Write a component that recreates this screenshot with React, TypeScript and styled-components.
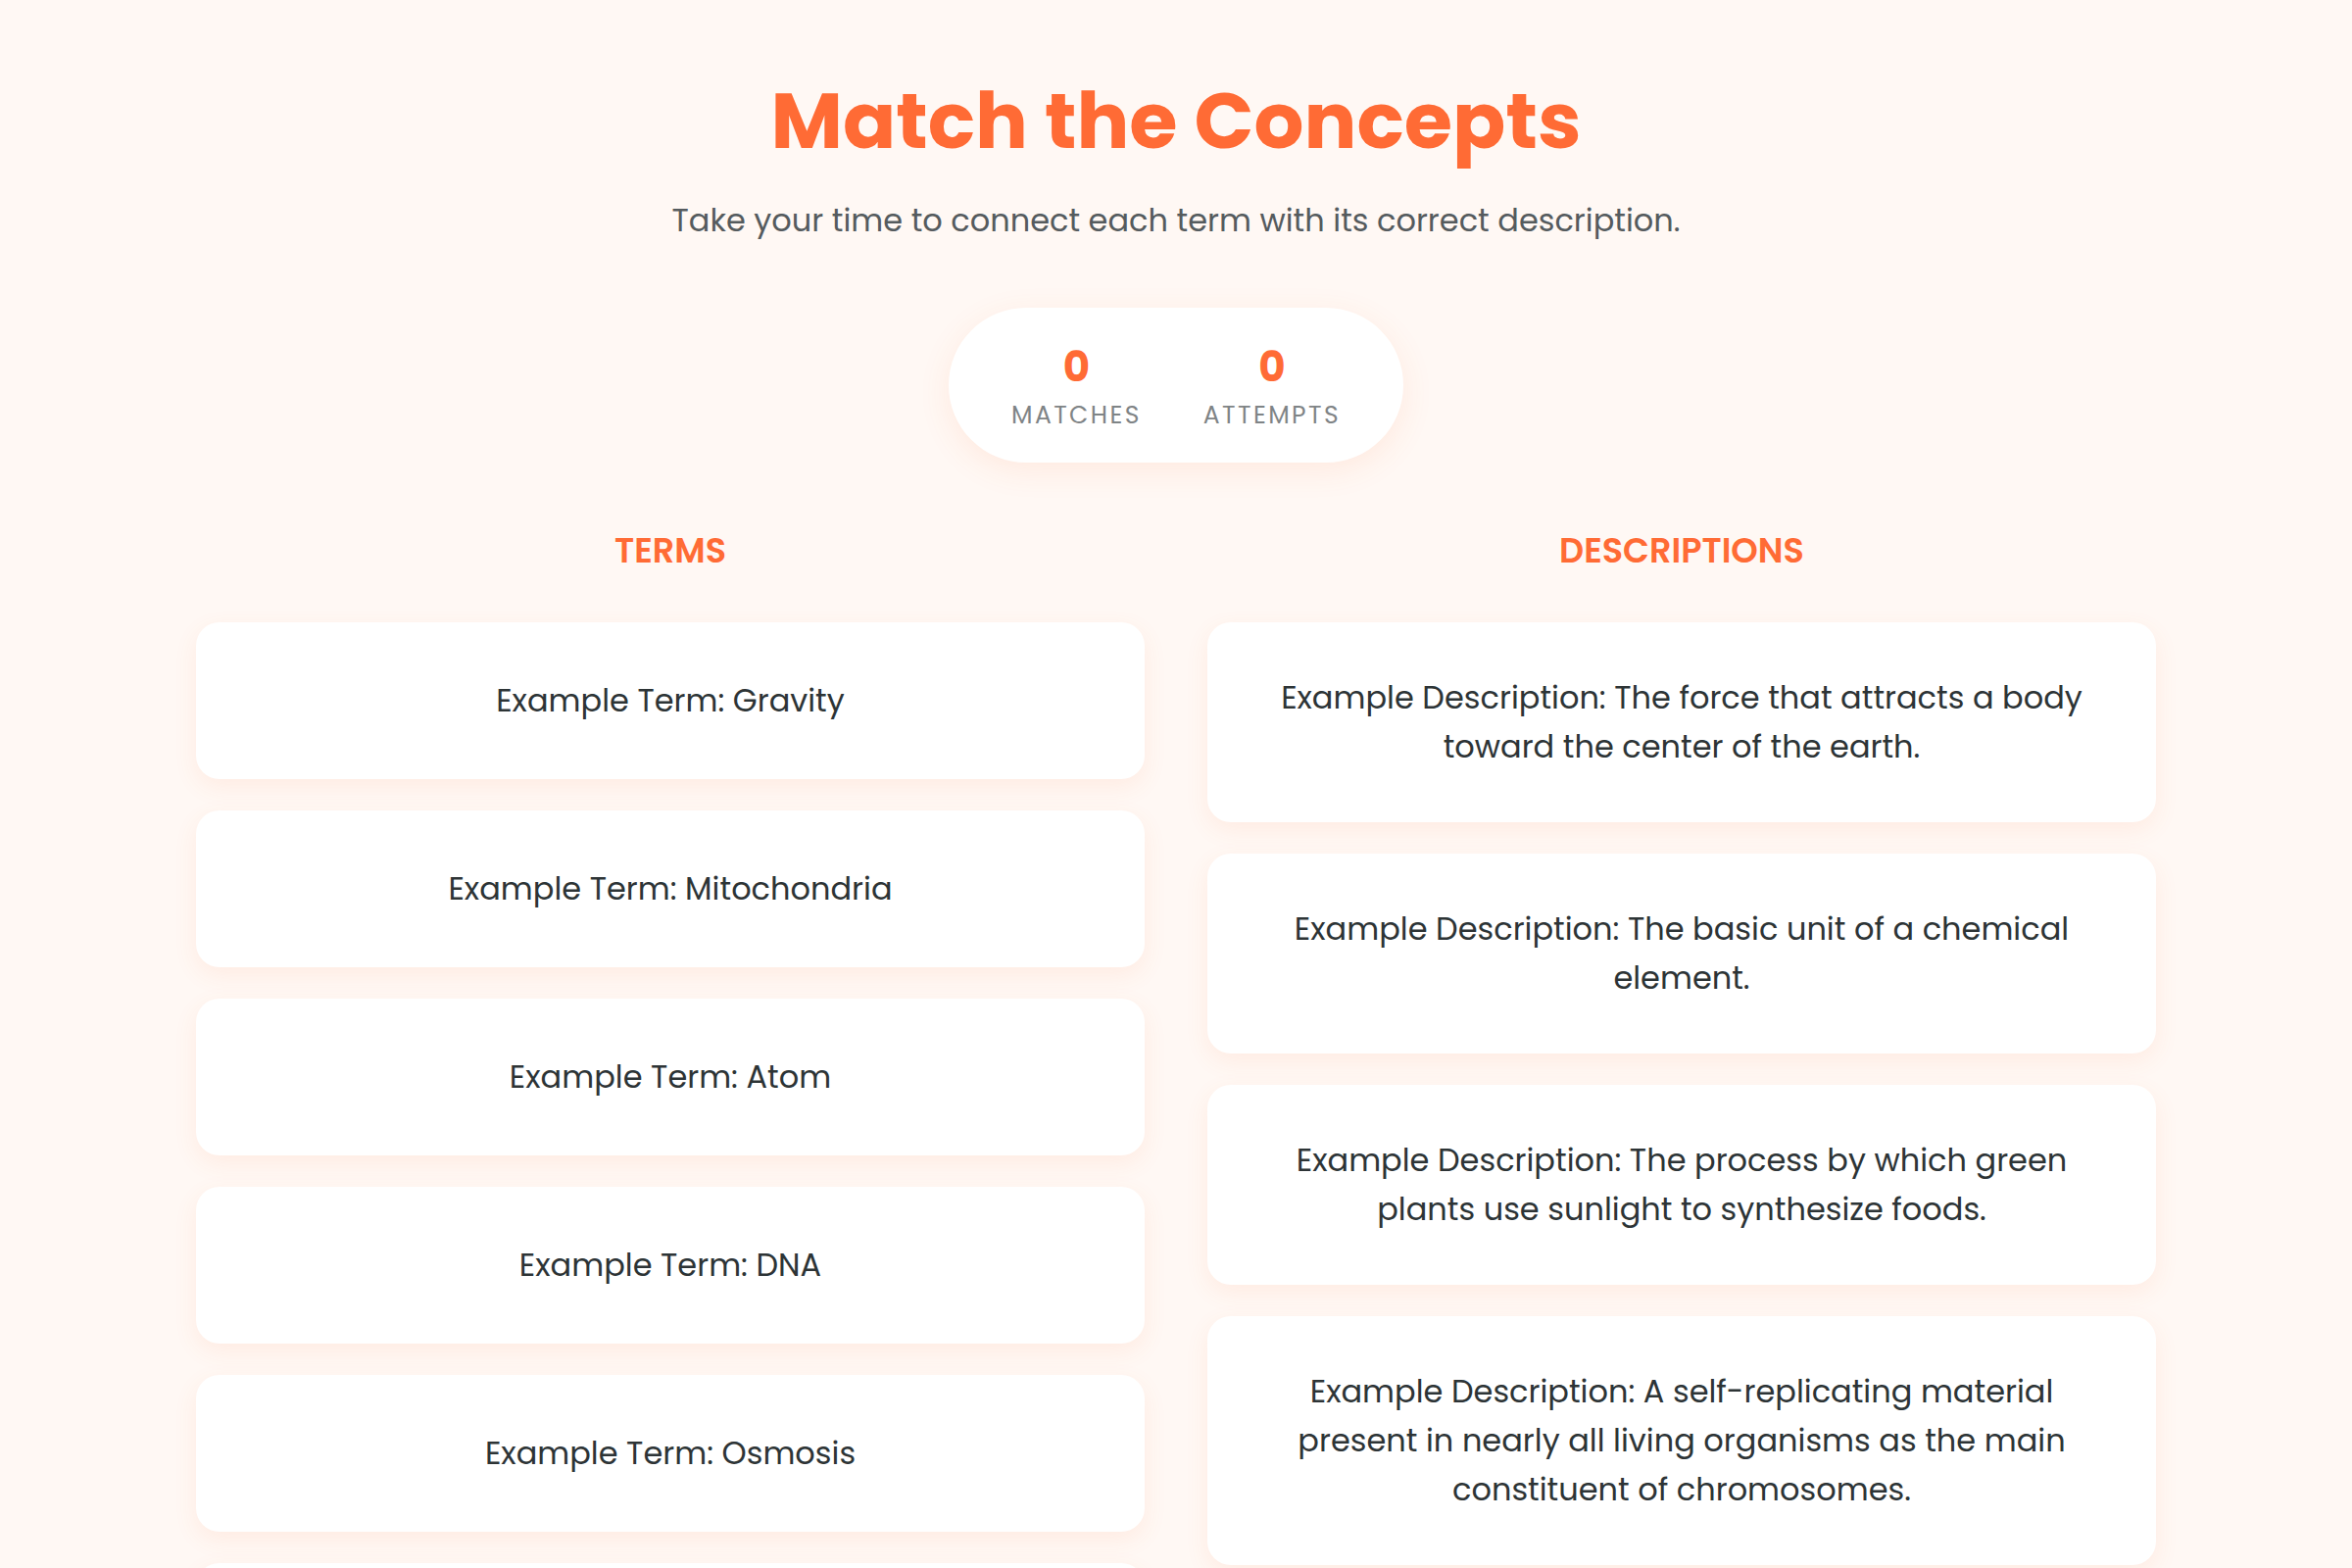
import styled, { createGlobalStyle } from "styled-components";

const GlobalStyle = createGlobalStyle`
  * {
    box-sizing: border-box;
  }
  body {
    margin: 0;
    background: #fff8f4;
    font-family: "Poppins", "Open Sans", "Noto Sans", sans-serif;
    color: #2d3436;
  }
`;

const Page = styled.div`
  max-width: 2000px;
  margin: 0 auto;
  padding: 75px 0 80px;
`;

const Header = styled.header`
  text-align: center;
`;

const Title = styled.h1`
  margin: 0;
  font-size: 80px;
  line-height: 1.2;
  font-weight: 700;
  color: #ff6b35;
`;

const Subtitle = styled.p`
  margin: 28px 0 0;
  font-size: 32px;
  line-height: 1.6;
  color: #555b5e;
`;

const Scoreboard = styled.div`
  display: flex;
  justify-content: center;
  margin: 64px 0 64px;
`;

const ScorePill = styled.div`
  display: flex;
  gap: 63px;
  padding: 36px 64px 30px;
  background: #fff;
  border-radius: 80px;
  box-shadow: 0 8px 32px rgba(255, 107, 53, 0.1);
`;

const Stat = styled.div`
  display: flex;
  flex-direction: column;
  align-items: center;
`;

const StatValue = styled.span`
  font-size: 42px;
  line-height: 1.2;
  font-weight: 700;
  color: #ff6b35;
`;

const StatLabel = styled.span`
  margin-top: 4px;
  font-size: 25px;
  line-height: 1.5;
  letter-spacing: 2.4px;
  text-transform: uppercase;
  color: #7f8486;
`;

const Board = styled.div`
  display: grid;
  grid-template-columns: 1fr 1fr;
  gap: 64px;
`;

const Column = styled.section`
  display: flex;
  flex-direction: column;
  gap: 32px;
`;

const ColumnTitle = styled.h2`
  margin: 0 0 14px;
  text-align: center;
  font-size: 35px;
  line-height: 1.5;
  font-weight: 600;
  color: #ff6b35;
  text-transform: uppercase;
`;

const Card = styled.button`
  display: flex;
  align-items: center;
  justify-content: center;
  width: 100%;
  min-height: 160px;
  padding: 52px;
  border: none;
  border-radius: 24px;
  background: #fff;
  box-shadow: 0 8px 24px rgba(255, 107, 53, 0.09);
  font-family: inherit;
  font-size: 32px;
  line-height: 50px;
  color: #2d3436;
  text-align: center;
  cursor: pointer;
`;

const terms = [
  "Example Term: Gravity",
  "Example Term: Mitochondria",
  "Example Term: Atom",
  "Example Term: DNA",
  "Example Term: Osmosis",
  "Example Term: Photosynthesis",
];

const descriptions = [
  "Example Description: The force that attracts a body toward the center of the earth.",
  "Example Description: The basic unit of a chemical element.",
  "Example Description: The process by which green plants use sunlight to synthesize foods.",
  "Example Description: A self-replicating material present in nearly all living organisms as the main constituent of chromosomes.",
  "Example Description: The powerhouse of the cell, producing energy through respiration.",
  "Example Description: The movement of water across a semipermeable membrane.",
];

export default function App() {
  return (
    <>
      <GlobalStyle />
      <Page>
        <Header>
          <Title>Match the Concepts</Title>
          <Subtitle>
            Take your time to connect each term with its correct description.
          </Subtitle>
        </Header>

        <Scoreboard>
          <ScorePill>
            <Stat>
              <StatValue>0</StatValue>
              <StatLabel>Matches</StatLabel>
            </Stat>
            <Stat>
              <StatValue>0</StatValue>
              <StatLabel>Attempts</StatLabel>
            </Stat>
          </ScorePill>
        </Scoreboard>

        <Board>
          <Column>
            <ColumnTitle>Terms</ColumnTitle>
            {terms.map((t) => (
              <Card key={t}>{t}</Card>
            ))}
          </Column>
          <Column>
            <ColumnTitle>Descriptions</ColumnTitle>
            {descriptions.map((d) => (
              <Card key={d}>{d}</Card>
            ))}
          </Column>
        </Board>
      </Page>
    </>
  );
}
